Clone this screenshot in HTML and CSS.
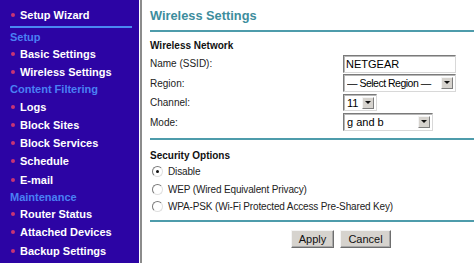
FILE: index.html
```html
<!DOCTYPE html>
<html>
<head>
<meta charset="utf-8">
<link rel="stylesheet" href="styles.css">
</head>
<body>
<div class="page">
  <nav class="sidebar">
    <div class="item">Setup Wizard</div>
    <div class="sep"></div>
    <div class="head">Setup</div>
    <div class="item">Basic Settings</div>
    <div class="item">Wireless Settings</div>
    <div class="head">Content Filtering</div>
    <div class="item">Logs</div>
    <div class="item">Block Sites</div>
    <div class="item">Block Services</div>
    <div class="item">Schedule</div>
    <div class="item">E-mail</div>
    <div class="head">Maintenance</div>
    <div class="item">Router Status</div>
    <div class="item">Attached Devices</div>
    <div class="item">Backup Settings</div>
  </nav>
  <div class="divider"></div>
  <main class="main">
    <div class="title-bar"><h1 class="title">Wireless Settings</h1></div>
    <div class="section">
      <h2 class="sec-head">Wireless Network</h2>
      <div class="form">
        <div class="row"><span class="label">Name (SSID):</span><div class="field"><div class="textbox">NETGEAR</div></div></div>
        <div class="row"><span class="label">Region:</span><div class="field"><div class="select w-region"><span class="sel-text tight">— Select Region —</span><span class="arrow"></span></div></div></div>
        <div class="row"><span class="label">Channel:</span><div class="field"><div class="select w-channel"><span class="sel-text">11</span><span class="arrow"></span></div></div></div>
        <div class="row"><span class="label">Mode:</span><div class="field"><div class="select w-mode"><span class="sel-text">g and b</span><span class="arrow"></span></div></div></div>
      </div>
    </div>
    <div class="section sec2">
      <h2 class="sec-head">Security Options</h2>
      <div class="radio-row"><span class="radio checked"></span><span class="rlabel">Disable</span></div>
      <div class="radio-row"><span class="radio"></span><span class="rlabel">WEP (Wired Equivalent Privacy)</span></div>
      <div class="radio-row"><span class="radio"></span><span class="rlabel">WPA-PSK (Wi-Fi Protected Access Pre-Shared Key)</span></div>
    </div>
    <div class="buttons">
      <button class="btn btn-apply">Apply</button>
      <button class="btn btn-cancel">Cancel</button>
    </div>
  </main>
</div>
</body>
</html>
```

FILE: styles.css
```css
html, body {
  margin: 0;
  padding: 0;
  background: #ffffff;
  width: 474px;
  height: 263px;
  overflow: hidden;
}
.page {
  display: flex;
  height: 263px;
  font-family: "Liberation Sans", Arial, sans-serif;
}
.sidebar {
  width: 139px;
  flex: none;
  background: #2c04a4;
  padding-top: 6px;
  box-sizing: border-box;
}
.item {
  position: relative;
  height: 18.2px;
  line-height: 18.2px;
  padding-left: 20px;
  color: #ffffff;
  font-weight: bold;
  font-size: 11px;
  white-space: nowrap;
}
.item::before {
  content: "";
  position: absolute;
  left: 11px;
  top: 7px;
  width: 4px;
  height: 4px;
  border-radius: 50%;
  background: #c83474;
}
.sep {
  height: 1.5px;
  margin: 2px 7px 1px 10px;
  background: #4a88f2;
}
.head {
  height: 16.4px;
  line-height: 16.4px;
  padding-left: 10px;
  color: #4a80f4;
  font-weight: bold;
  font-size: 11px;
  white-space: nowrap;
}
.divider {
  width: 2px;
  flex: none;
  margin-left: 1px;
  background: #8c8c8c;
}
.main {
  flex: 1;
  padding-left: 8px;
  min-width: 0;
}
.title-bar {
  height: 30px;
  border-bottom: 2px solid #4e9cab;
  box-sizing: content-box;
}
.title {
  margin: 0;
  padding-top: 8px;
  line-height: 16px;
  font-size: 12.8px;
  font-weight: bold;
  color: #3d8d9d;
}
.section {
  border-bottom: 2px solid #4e9cab;
}
.sec-head {
  margin: 7px 0 0 0;
  line-height: 14px;
  font-size: 10px;
  font-weight: bold;
  color: #111111;
}
.form {
  padding-top: 1px;
  padding-bottom: 6px;
}
.row {
  display: grid;
  grid-template-columns: 193px auto;
  align-items: center;
  height: 19.5px;
}
.label {
  font-size: 10px;
  color: #222222;
}
.textbox {
  width: 113px;
  height: 18px;
  box-sizing: border-box;
  border-top: 1px solid #7a7a7a;
  border-left: 1px solid #7a7a7a;
  border-right: 1px solid #d8d8d8;
  border-bottom: 1px solid #d8d8d8;
  box-shadow: inset 1px 1px 0 #b8b8b8;
  font-size: 11px;
  line-height: 16px;
  padding-left: 2px;
  color: #000;
}
.select {
  display: flex;
  align-items: center;
  height: 18px;
  box-sizing: border-box;
  border-top: 1px solid #7a7a7a;
  border-left: 1px solid #7a7a7a;
  border-right: 1px solid #d8d8d8;
  border-bottom: 1px solid #d8d8d8;
  box-shadow: inset 1px 1px 0 #b8b8b8;
  padding: 1px 2px 1px 3px;
  background: #fff;
}
.w-region { width: 113px; }
.w-channel { width: 34px; height: 17px; }
.w-mode { width: 90px; }
.sel-text {
  flex: 1;
  font-size: 11px;
  color: #000;
  white-space: nowrap;
  overflow: hidden;
}
.sel-text.tight {
  letter-spacing: -0.5px;
  font-size: 10.5px;
}
.arrow {
  position: relative;
  flex: none;
  width: 12px;
  height: 12px;
  background: #d6d3ce;
  border-top: 1px solid #f4f4f4;
  border-left: 1px solid #f4f4f4;
  border-right: 1px solid #7e7e7e;
  border-bottom: 1px solid #7e7e7e;
  box-sizing: border-box;
}
.arrow::after {
  content: "";
  position: absolute;
  left: 2px;
  top: 3px;
  border-left: 3px solid transparent;
  border-right: 3px solid transparent;
  border-top: 3px solid #111;
}
.sec2 {
  padding-top: 2px;
  padding-bottom: 4px;
}
.radio-row {
  display: flex;
  align-items: center;
  height: 17.5px;
}
.radio {
  position: relative;
  width: 9px;
  height: 9px;
  margin-left: 2px;
  margin-right: 5px;
  border-radius: 50%;
  border: 1px solid;
  border-color: #7a7a7a #e0e0e0 #e0e0e0 #7a7a7a;
  background: #fff;
  flex: none;
}
.radio.checked::after {
  content: "";
  position: absolute;
  left: 3px;
  top: 3px;
  width: 3px;
  height: 3px;
  border-radius: 50%;
  background: #111;
}
.rlabel {
  font-size: 10px;
  color: #222222;
  white-space: nowrap;
  letter-spacing: -0.15px;
}
.buttons {
  display: flex;
  gap: 6px;
  padding-left: 141px;
  padding-top: 8px;
}
.btn {
  height: 18px;
  padding: 0 6px;
  font-family: "Liberation Sans", Arial, sans-serif;
  font-size: 11px;
  color: #111;
  background: #d6d3ce;
  border: 1px solid;
  border-color: #f4f4f4 #6e6e6e #6e6e6e #f4f4f4;
  box-shadow: inset -1px -1px 0 #a8a8a8;
  line-height: 14px;
}
.btn-apply { width: 43px; }
.btn-cancel { width: 51px; }
```
